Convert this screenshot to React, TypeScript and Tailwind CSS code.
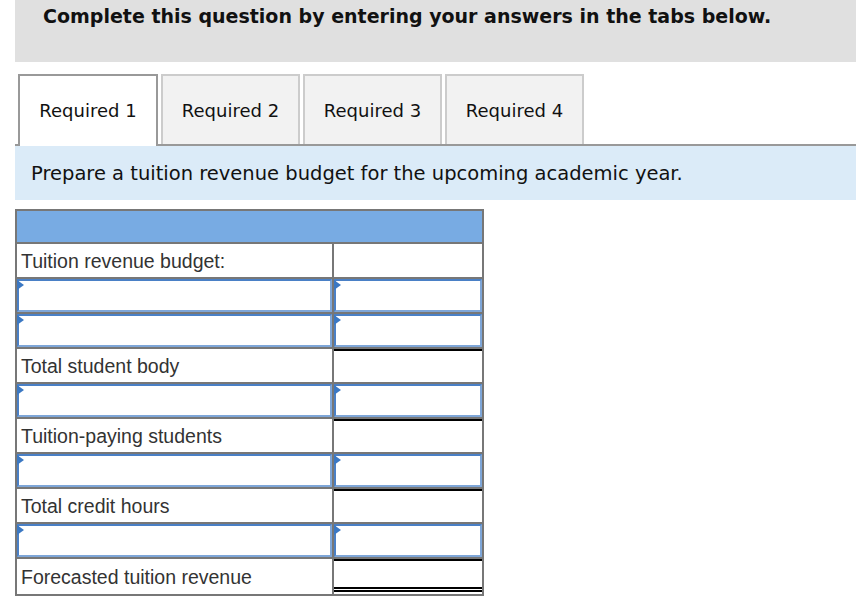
import React from "react";

const rows: { label?: string; input?: boolean; total?: boolean; final?: boolean }[] = [
  { label: "Tuition revenue budget:" },
  { input: true },
  { input: true },
  { label: "Total student body", total: true },
  { input: true },
  { label: "Tuition-paying students", total: true },
  { input: true },
  { label: "Total credit hours", total: true },
  { input: true },
  { label: "Forecasted tuition revenue", total: true, final: true },
];

function InputBox() {
  return (
    <div className="relative h-full border-2 border-[#4a80c6] border-b-[#7ea6d8] border-r-[#7ea6d8] bg-white">
      <span className="absolute left-[-2px] top-[-1px] h-0 w-0 border-y-[5px] border-l-[7px] border-y-transparent border-l-[#3b78c3]" />
    </div>
  );
}

const tabs = ["Required 1", "Required 2", "Required 3", "Required 4"];

export default function App() {
  return (
    <div className="h-[600px] w-[856px] overflow-hidden bg-white font-['DejaVu_Sans',Verdana,sans-serif] text-[#111]">
      <div className="ml-[15px] h-[62px] bg-[#e0e0e0] pl-[28px] pt-[4px]">
        <h1 className="text-[19px] font-bold leading-[24px]">
          Complete this question by entering your answers in the tabs below.
        </h1>
      </div>

      <div className="ml-[15px] mt-[12px] flex h-[72px] items-end">
        <div className="h-[2px] w-[3px] bg-[#999]" />
        {tabs.map((t, i) =>
          i === 0 ? (
            <div
              key={t}
              className="flex h-[72px] w-[140px] items-center justify-center border-2 border-b-0 border-[#999] bg-white pb-[2px] text-[18px]"
            >
              {t}
            </div>
          ) : (
            <div key={t} className="flex h-[72px] items-end">
              <div className="h-[2px] w-[3px] bg-[#999]" />
              <div className="flex h-[72px] w-[139px] flex-col">
                <div className="flex flex-1 items-center justify-center border-2 border-b-0 border-[#ccc] bg-[#f2f2f2] text-[18px]">
                  {t}
                </div>
                <div className="h-[2px] bg-[#999]" />
              </div>
            </div>
          )
        )}
        <div className="h-[2px] flex-1 bg-[#999]" />
      </div>

      <div className="ml-[15px] flex h-[54px] items-center bg-[#dbebf8] pl-[16px] pt-[2px]">
        <p className="text-[19.5px]">Prepare a tuition revenue budget for the upcoming academic year.</p>
      </div>

      <div className="ml-[15px] mt-[9px] w-[469px] border-2 border-[#777] font-['Liberation_Sans',Arial,sans-serif] text-[19.5px] text-[#333]">
        <div className="h-[33px] border-b-2 border-[#777] bg-[#78abe3]" />
        {rows.map((r, i) => (
          <div
            key={i}
            className={`flex h-[35px] ${i < rows.length - 1 ? "border-b-2 border-[#777]" : ""}`}
          >
            <div className="w-[317px] border-r-2 border-[#777]">
              {r.input ? (
                <InputBox />
              ) : (
                <div className="flex h-full items-center pl-[4px] pt-[2px]">{r.label}</div>
              )}
            </div>
            <div className="flex-1">
              {r.input ? (
                <InputBox />
              ) : r.final ? (
                <div className="h-full border-t-2 border-black">
                  <div className="mt-[26px] h-[5px] border-y-2 border-black" />
                </div>
              ) : r.total ? (
                <div className="h-full border-t-2 border-black" />
              ) : (
                <div className="h-full" />
              )}
            </div>
          </div>
        ))}
      </div>
    </div>
  );
}
